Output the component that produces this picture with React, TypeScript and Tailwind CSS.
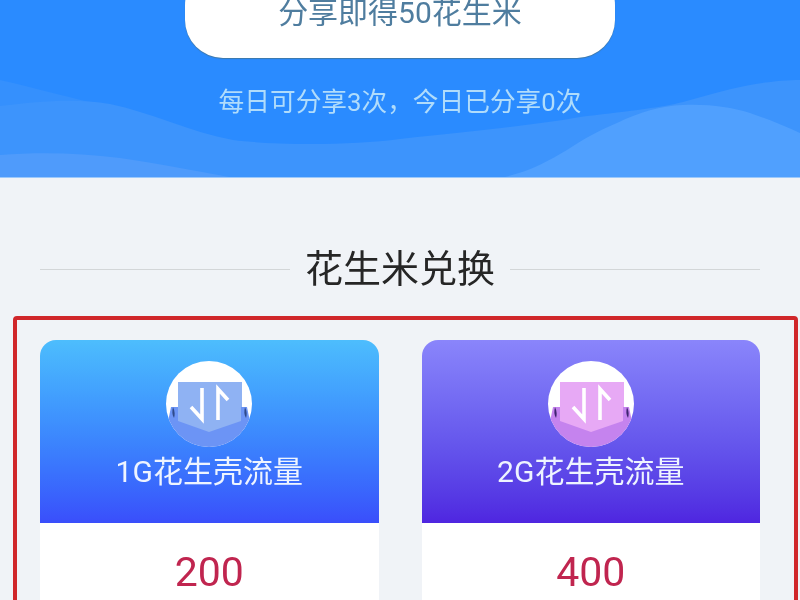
const FONT = "font-['Roboto','Noto_Sans_CJK_SC',sans-serif]";

function Waves() {
  return (
    <svg className="absolute inset-0" width="800" height="178" viewBox="0 0 800 178" fill="none">
      <path d="M0 80 C35 88 70 98 115 108 L0 130 Z" fill="#3590fd" />
      <path d="M0 106 C40 101 75 98 110 104 C150 112 190 132 233 140 C270 145 350 146 400 139 C470 131 530 126 580 117 C620 112 660 108 683 102 C705 96 725 90 745 86 C765 82 785 80 800 80 L800 178 L0 178 Z" fill="#3d94fc" />
      <path d="M0 155 C40 152 80 153 120 158 C150 162 190 170 235 178 L0 178 Z" fill="#4f9bfb" />
      <path d="M500 178 C530 172 550 160 567 150 C585 138 600 130 617 123 C640 112 660 106 683 105 C710 104 730 107 750 113 C770 120 785 126 800 133 L800 178 Z" fill="#50a0fe" />
      <rect y="177" width="800" height="1" fill="#9cc9fb" />
    </svg>
  );
}

function FlowIcon({ id, back, pocket, mark }: { id: string; back: string; pocket: string; mark: string }) {
  return (
    <svg width="86" height="86" viewBox="0 0 86 86">
      <defs>
        <clipPath id={id}>
          <circle cx="43" cy="43" r="43" />
        </clipPath>
      </defs>
      <g clipPath={`url(#${id})`}>
        <rect width="86" height="86" fill="#ffffff" />
        <rect x="12" y="21" width="64" height="50" fill={back} />
        <path d="M5 46 L12 46 L12 60 L43 71 L75 60 L75 46 L81 46 L90 90 L-4 90 Z" fill={pocket} />
        <path d="M7 46 C9 50 9 54 8 57 C6 54 6 50 7 46 Z" fill={mark} />
        <path d="M79 46 C81 50 81 54 80 57 C78 54 78 50 79 46 Z" fill={mark} />
        <path d="M36 27 V58 L25 46" stroke="#fff" strokeWidth="3.6" fill="none" />
        <path d="M52 59 V28 L62 39" stroke="#fff" strokeWidth="3.6" fill="none" />
      </g>
    </svg>
  );
}

function Card({
  title,
  price,
  gradient,
  icon,
}: {
  title: string;
  price: string;
  gradient: string;
  icon: React.ReactNode;
}) {
  return (
    <div className="w-[338.5px] shrink-0">
      <div className={`h-[183px] rounded-t-[16px] flex flex-col items-center pt-[21px] ${gradient}`}>
        {icon}
        <div className="mt-[3px] text-[30px] leading-[44px] text-[#eef4ff]">{title}</div>
      </div>
      <div className="h-[120px] bg-white flex justify-center pt-[23px] text-[41px] leading-[52px] text-[#c0254f]">
        {price}
      </div>
    </div>
  );
}

export default function App() {
  return (
    <div className={`w-[800px] h-[600px] overflow-hidden bg-[#f0f3f7] blur-[0.5px] ${FONT}`}>
      <div className="relative h-[178px] overflow-hidden bg-[#2a8bff] flex flex-col items-center">
        <Waves />
        <div className="relative -mt-[33px] w-[430px] h-[91px] shrink-0 rounded-[38px] bg-white flex items-center justify-center text-[30px] leading-[34px] text-[#4f7d9f] shadow-[0_1px_1px_#3f78a8]">
          分享即得50花生米
        </div>
        <div className="relative mt-[26px] text-[25.7px] leading-[36px] text-[#b0dcfb]">
          每日可分享3次，今日已分享0次
        </div>
      </div>

      <div className="flex items-center mt-[65px] px-[40px] h-[52px]">
        <div className="flex-1 h-px bg-[#d3d6d8]" />
        <div className="px-[15px] text-[38px] leading-[52px] text-[#262626]">花生米兑换</div>
        <div className="flex-1 h-px bg-[#d3d6d8]" />
      </div>

      <div className="ml-[13px] mt-[21px] w-[785px] h-[400px] border-[4px] border-[#d0262a] rounded-[4px] pt-[20px] pl-[23px] flex gap-[43px]">
        <Card
          title="1G花生壳流量"
          price="200"
          gradient="bg-gradient-to-b from-[#4dbdfd] to-[#3a4efb]"
          icon={<FlowIcon id="icon-blue" back="#8fb2f3" pocket="#6c94f5" mark="#2f4a8a" />}
        />
        <Card
          title="2G花生壳流量"
          price="400"
          gradient="bg-gradient-to-b from-[#8a85fb] to-[#4f25e0]"
          icon={<FlowIcon id="icon-purple" back="#e7a9f5" pocket="#c583ee" mark="#3f2470" />}
        />
      </div>
    </div>
  );
}
